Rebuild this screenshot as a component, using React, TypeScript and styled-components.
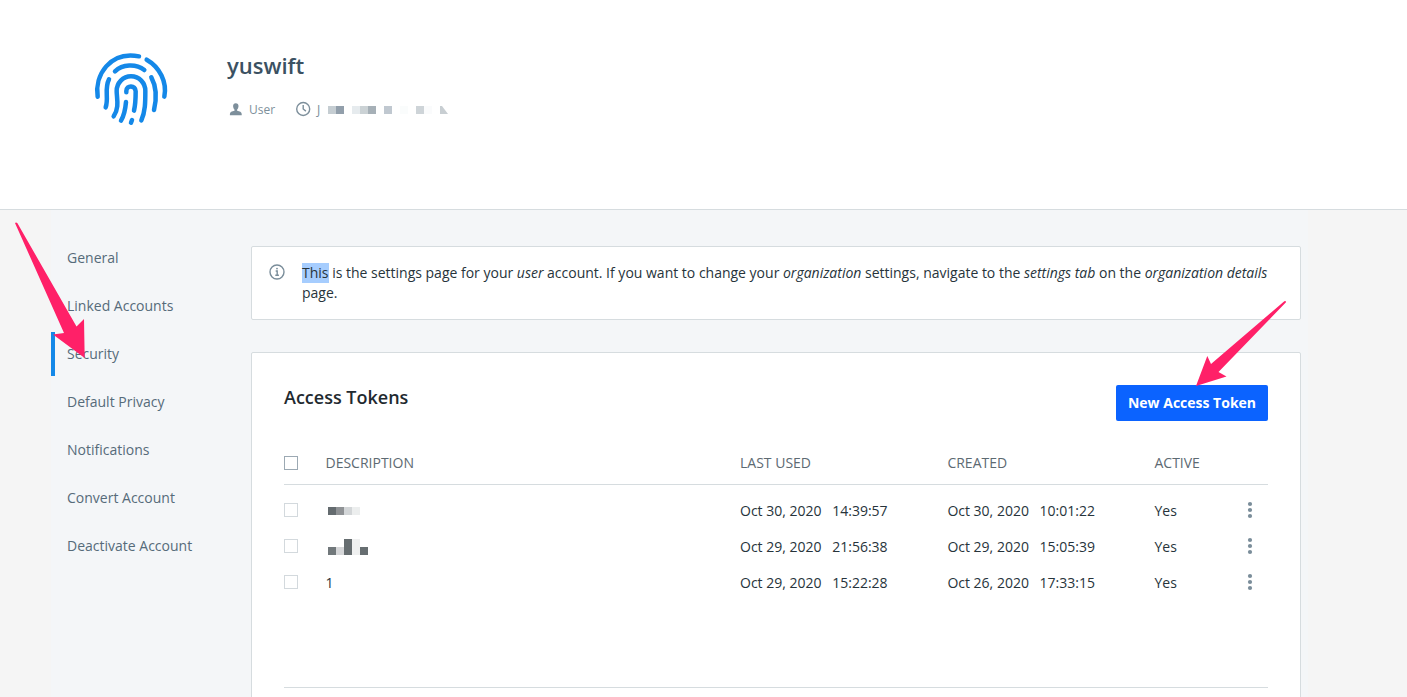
import React from "react";
import styled, { createGlobalStyle } from "styled-components";

const GlobalStyle = createGlobalStyle`
  * { box-sizing: border-box; }
  body {
    margin: 0;
    background: #f5f5f5;
    color: #27343b;
    font: 14px/20px "Open Sans", sans-serif;
    overflow: hidden;
  }
`;

const Page = styled.div`
  position: relative;
  height: 697px;
  overflow: hidden;
  display: flex;
  flex-direction: column;
`;

const Header = styled.header`
  flex: none;
  display: flex;
  align-items: flex-start;
  height: 210px;
  padding: 45px 0 0 85px;
  background: #fff;
  border-bottom: 1px solid #d6dcdf;
`;

const Profile = styled.div`
  margin-left: 52px;
  padding-top: 4px;
`;

const UserName = styled.h1`
  margin: 0;
  font-size: 22px;
  line-height: 32px;
  font-weight: 600;
  color: #3b5162;
`;

const Meta = styled.div`
  display: flex;
  align-items: center;
  height: 20px;
  margin-top: 19px;
  padding-left: 2px;
  font-size: 12px;
  color: #7d8f9b;
`;

const UserIcon = styled.svg`
  flex: none;
  margin: -2px 7px 0 0;
`;

const ClockIcon = styled.svg`
  flex: none;
  margin: 0 6px 3px 20px;
`;

const Mosaic = styled.svg<{ $gap?: number }>`
  display: block;
  margin-left: ${(p) => p.$gap ?? 0}px;
`;

const Body = styled.div`
  flex: 1;
  display: flex;
  width: 1257px;
  margin-left: 51px;
  background: #f4f6f8;
`;

const SideNav = styled.nav`
  width: 200px;
  padding-top: 26px;
  display: flex;
  flex-direction: column;
  gap: 4px;
`;

const NavItem = styled.a<{ $active?: boolean }>`
  height: 44px;
  padding-left: 12px;
  line-height: 44px;
  color: #566b7a;
  border-left: 4px solid ${(p) => (p.$active ? "#1488e8" : "transparent")};
`;

const Main = styled.main`
  width: 1050px;
  padding-top: 36px;
  display: flex;
  flex-direction: column;
  gap: 32px;
`;

const Notice = styled.section`
  flex: none;
  display: flex;
  padding: 16px 30px 16px 17px;
  background: #fff;
  border: 1px solid #d6dcdf;
  border-radius: 2px;
`;

const NoticeText = styled.p`
  margin: 0 0 0 17px;
  letter-spacing: -0.003px;
`;

const Selected = styled.span`
  display: inline-block;
  height: 20px;
  vertical-align: top;
  background: #a6cdfe;
`;

const InfoIcon = styled.svg`
  flex: none;
`;

const Card = styled.section`
  flex: none;
  height: 400px;
  padding: 32px;
  background: #fff;
  border: 1px solid #d6dcdf;
  border-radius: 2px;
`;

const CardHead = styled.div`
  display: flex;
  justify-content: space-between;
  height: 56px;
`;

const CardTitle = styled.h2`
  margin: 0;
  font-size: 18px;
  line-height: 24px;
  font-weight: 600;
  color: #1f2a30;
`;

const PrimaryButton = styled.button`
  width: 152px;
  height: 36px;
  padding: 0;
  border: 0;
  border-radius: 2px;
  background: #0b63ff;
  color: #fff;
  font: 700 14px/36px "Open Sans", sans-serif;
`;

const TableRow = styled.div<{ $head?: boolean }>`
  display: grid;
  grid-template-columns: 41.5px 414.5px 207.4px 207.1px 89px 1fr;
  align-items: center;
  height: ${(p) => (p.$head ? 44 : 36)}px;
  color: ${(p) => (p.$head ? "#5d6a72" : "inherit")};
  border-bottom: ${(p) => (p.$head ? "1px solid #d6dcdf" : "0")};
`;

const TableRows = styled.div`
  height: 203px;
  padding-top: 8px;
  border-bottom: 1px solid #d6dcdf;
`;

const Checkbox = styled.span<{ $strong?: boolean }>`
  width: 14px;
  height: 14px;
  margin-top: ${(p) => (p.$strong ? 0 : -2)}px;
  border: 1px solid ${(p) => (p.$strong ? "#9ca9b3" : "#d3d9dd")};
`;

const Stamp = styled.span`
  display: flex;
  gap: 10.7px;
`;

const DotsIcon = styled.svg`
  display: block;
  margin: -2px 0 0 3.5px;
`;

const Annotations = styled.svg`
  position: absolute;
  inset: 0;
  pointer-events: none;
`;

type Block = [number, number, number, number, string];

const Blocks = ({ blocks }: { blocks: Block[] }) => (
  <>
    {blocks.map(([x, y, w, h, fill]) => (
      <rect key={`${x}-${y}`} x={x} y={y} width={w} height={h} fill={fill} />
    ))}
  </>
);

const dateBlocks: Block[] = [
  [0, 0, 8, 8, "#c5cdd2"],
  [8, 0, 8, 8, "#929fab"],
  [24, 0, 8, 8, "#e6ebee"],
  [32, 0, 8, 8, "#cbd2d5"],
  [40, 0, 8, 8, "#a6b0b7"],
  [56, 0, 8, 8, "#c0c8d0"],
  [72, 0, 8, 8, "#fafcfc"],
  [88, 0, 8, 8, "#ced4d8"],
  [96, 0, 8, 8, "#fafbfc"],
];

const firstName: Block[] = [
  [0, 0, 8, 8, "#646b6f"],
  [8, 0, 8, 8, "#8f9295"],
  [16, 0, 8, 8, "#d3d6d8"],
  [24, 0, 8, 8, "#eceeee"],
];

const secondName: Block[] = [
  [0, 8, 8, 8, "#71787b"],
  [8, 8, 8, 8, "#d6d7d9"],
  [16, 0, 8, 16, "#666d70"],
  [24, 0, 8, 16, "#eff0f0"],
  [32, 8, 8, 8, "#676e71"],
];

const tokens = [
  {
    name: (
      <Mosaic width="32" height="8" $gap={2.5}>
        <Blocks blocks={firstName} />
      </Mosaic>
    ),
    used: ["Oct 30, 2020", "14:39:57"],
    created: ["Oct 30, 2020", "10:01:22"],
  },
  {
    name: (
      <Mosaic width="40" height="16" $gap={2.5}>
        <Blocks blocks={secondName} />
      </Mosaic>
    ),
    used: ["Oct 29, 2020", "21:56:38"],
    created: ["Oct 29, 2020", "15:05:39"],
  },
  {
    name: "1",
    used: ["Oct 29, 2020", "15:22:28"],
    created: ["Oct 26, 2020", "17:33:15"],
  },
];

const navItems = [
  "General",
  "Linked Accounts",
  "Security",
  "Default Privacy",
  "Notifications",
  "Convert Account",
  "Deactivate Account",
];

const Fingerprint = () => (
  <svg width="90" height="90" viewBox="0 0 270 270" fill="none" stroke="#1488e8" strokeWidth="13.5" strokeLinecap="round">
    <path d="M38 155C28 91 75 17 162 34" />
    <path d="M185 44C224 66 247 111 238 155" />
    <path d="M90 79C112 58 152 55 178 75" />
    <path d="M72 103C57 133 72 159 62 187" />
    <path d="M199 97C215 126 215 161 207 195" />
    <path d="M86 214C104 188 95 160 95 138C95 114 114 94 138 94C163 94 181 114 181 138C181 171 181 199 169 226" />
    <path d="M124 142V138C124 119 152 120 152 139C152 163 151 181 147 197" />
    <path d="M123 171C121 194 117 212 108 227" />
    <path d="M141 225L138 233" />
  </svg>
);

export default function App() {
  return (
    <>
      <GlobalStyle />
      <Page>
        <Header>
          <Fingerprint />
          <Profile>
            <UserName>yuswift</UserName>
            <Meta>
              <UserIcon width="13" height="13" viewBox="0 0 13 13" fill="#7d8f9b">
                <path d="M6.8.2C8.6.2 9.5 1.3 9.5 3c0 1.6-.6 2.8-1.4 3.6v1.2c2.6.6 4.6 1.3 4.6 3.1v1.4H.9v-1.4c0-1.8 2-2.5 4.6-3.1V6.6C4.7 5.8 4.1 4.6 4.1 3 4.1 1.3 5 .2 6.8.2Z" />
              </UserIcon>
              User
              <ClockIcon width="16" height="16" viewBox="0 0 16 16" fill="none" stroke="#7d8f9b" strokeWidth="1.4">
                <circle cx="8.2" cy="8" r="6.5" />
                <path d="M8.2 3.9V8l2.7 2.1" />
              </ClockIcon>
              J
              <Mosaic width="120" height="8" $gap={8}>
                <Blocks blocks={dateBlocks} />
                <path d="M112 0H114L120 8H112Z" fill="#c8ced2" />
              </Mosaic>
            </Meta>
          </Profile>
        </Header>
        <Body>
          <SideNav>
            {navItems.map((item) => (
              <NavItem key={item} $active={item === "Security"}>
                {item}
              </NavItem>
            ))}
          </SideNav>
          <Main>
            <Notice>
              <InfoIcon width="16" height="18" viewBox="0 0 16 18" fill="none" stroke="#7a8d9a" strokeWidth="1.4">
                <circle cx="8" cy="9" r="7" />
                <path d="M6.7 8H8.2V12M6.3 12.2H9.9" />
                <circle cx="8" cy="5.6" r=".9" fill="#7a8d9a" stroke="none" />
              </InfoIcon>
              <NoticeText>
                <Selected>This</Selected> is the settings page for your <em>user</em> account. If you want to change
                your <em>organization</em> settings, navigate to the <em>settings tab</em> on the{" "}
                <em>organization details</em> page.
              </NoticeText>
            </Notice>
            <Card>
              <CardHead>
                <CardTitle>Access Tokens</CardTitle>
                <PrimaryButton>New Access Token</PrimaryButton>
              </CardHead>
              <TableRow $head>
                <Checkbox $strong />
                <span>DESCRIPTION</span>
                <span>LAST USED</span>
                <span>CREATED</span>
                <span>ACTIVE</span>
              </TableRow>
              <TableRows>
                {tokens.map((token) => (
                  <TableRow key={token.used[1]}>
                    <Checkbox />
                    <span>{token.name}</span>
                    <Stamp>
                      <span>{token.used[0]}</span>
                      <span>{token.used[1]}</span>
                    </Stamp>
                    <Stamp>
                      <span>{token.created[0]}</span>
                      <span>{token.created[1]}</span>
                    </Stamp>
                    <span>Yes</span>
                    <DotsIcon width="6" height="18" viewBox="0 0 6 18" fill="#7a8d9a">
                      <circle cx="3" cy="3" r="2.1" />
                      <circle cx="3" cy="9" r="2.1" />
                      <circle cx="3" cy="15" r="2.1" />
                    </DotsIcon>
                  </TableRow>
                ))}
              </TableRows>
            </Card>
          </Main>
        </Body>
        <Annotations width="1407" height="697" fill="#ff2068">
          <path d="M15 223Q16 222 17.3 223L76.5 326.5L84 319L84.7 358L53 334.5L64 333Z" />
          <path d="M1196 386L1207.3 356L1211 364L1284.3 301.2Q1286 300.5 1286 302.3L1218.5 372L1226.5 376.5Z" />
        </Annotations>
      </Page>
    </>
  );
}
